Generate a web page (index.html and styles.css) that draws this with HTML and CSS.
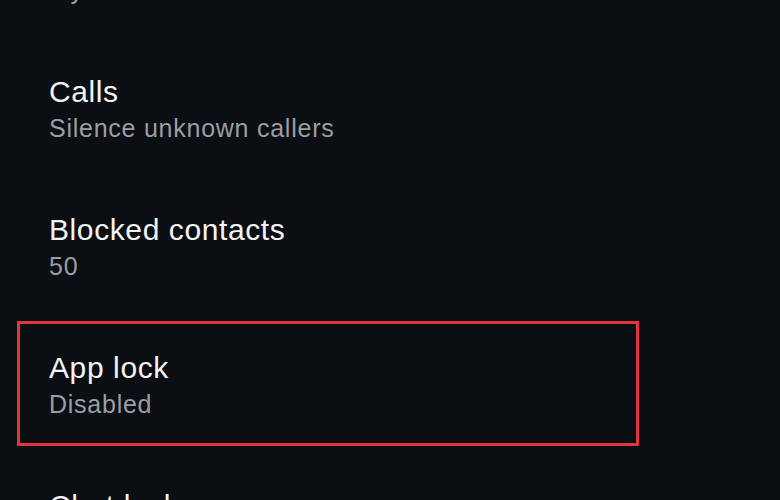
FILE: index.html
```html
<!DOCTYPE html>
<html lang="en">
<head>
    <meta charset="UTF-8">
    <meta name="viewport" content="width=device-width, initial-scale=1.0">
    <title>Privacy</title>
    <link rel="stylesheet" href="styles.css">
</head>
<body>
    <div class="settings-list">
        <div class="setting-item">
            <div class="setting-title">Live location</div>
            <div class="setting-sub">My contacts</div>
        </div>
        <div class="setting-item">
            <div class="setting-title">Calls</div>
            <div class="setting-sub">Silence unknown callers</div>
        </div>
        <div class="setting-item">
            <div class="setting-title">Blocked contacts</div>
            <div class="setting-sub">50</div>
        </div>
        <div class="setting-item">
            <span class="highlight"></span>
            <div class="setting-title">App lock</div>
            <div class="setting-sub">Disabled</div>
        </div>
        <div class="setting-item">
            <div class="setting-title">Chat lock</div>
            <div class="setting-sub">Off</div>
        </div>
    </div>
</body>
</html>
```

FILE: styles.css
```css
html, body {
    height: 100%;
}

body {
    font-family: 'Liberation Sans', Arial, sans-serif;
    margin: 0;
    padding: 0;
    background-color: #0b0f13;
    color: #f2f2f2;
    overflow: hidden;
}

.settings-list {
    display: flex;
    flex-direction: column;
    margin-top: -96px;
}

.setting-item {
    position: relative;
    height: 138px;
    box-sizing: border-box;
    padding: 33px 0 33px 49px;
}

.setting-title {
    font-size: 30px;
    line-height: 34px;
    letter-spacing: 0.6px;
    color: #f2f3f4;
}

.setting-sub {
    font-size: 25px;
    line-height: 38px;
    letter-spacing: 0.75px;
    color: #9a9ea3;
}

/* red annotation box drawn over the row */
.highlight {
    position: absolute;
    top: 3px;
    left: 17px;
    width: 622px;
    height: 125px;
    box-sizing: border-box;
    border: 3.5px solid #e2353c;
}
```
